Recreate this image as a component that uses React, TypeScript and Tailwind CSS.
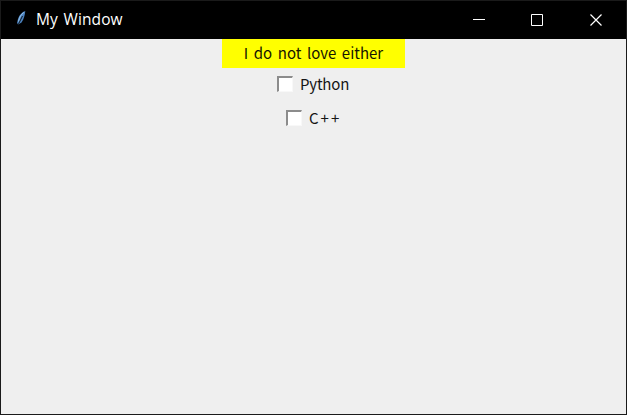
import React from "react";

function CheckOption({ label, className, textClass }: { label: string; className: string; textClass: string }) {
  return (
    <label className={`flex items-start leading-[20px] text-[#151515] ${className}`}>
      <span className="mt-[2px] h-[16px] w-[16px] shrink-0 border-t-2 border-r border-b border-l-2 border-t-[#8c8c8c] border-r-[#f8f8f8] border-b-[#f8f8f8] border-l-[#8c8c8c] bg-white" />
      <span className={`whitespace-nowrap ${textClass}`}>{label}</span>
    </label>
  );
}

export default function App() {
  return (
    <div className="flex h-[415px] w-[627px] flex-col overflow-hidden border border-[#1a1a1a] bg-[#efefef]">
      <header className="flex h-[38px] shrink-0 items-center bg-black text-white">
        <svg className="mb-[4px] ml-[14px] h-[16px] w-[12px]" viewBox="0 0 12 16">
          <path d="M10.3 1C7 2 4 5 3 9L2 13L3.3 14.5L6.5 12.5C9 9 9.8 5 10.3 1Z" fill="#4a80bd" />
          <path d="M8.8 2.5C6 4.5 4.5 7 3.5 11.5" stroke="#9cc8ee" fill="none" />
          <path d="M7.5 6L5.5 10L3 15" stroke="#101820" fill="none" />
        </svg>
        <span className="mb-[2px] ml-[9px] flex-1 whitespace-nowrap font-['Open_Sans',sans-serif] text-[15.5px] leading-[20px] tracking-[0.1px] [word-spacing:1.5px]">
          My Window
        </span>
        <div className="mr-px flex h-full">
          {["M0 5.5H12", "M0.5 0.5H11.5V11.5H0.5Z", "M0.5 0.5L11.5 11.5M11.5 0.5L0.5 11.5"].map((d, i) => (
            <button key={i} className="flex w-[58.5px] items-center justify-center">
              <svg className="h-[12px] w-[12px]" viewBox="0 0 12 12">
                <path d={d} stroke="white" strokeWidth={i === 2 ? 1.2 : 1} fill="none" />
              </svg>
            </button>
          ))}
        </div>
      </header>
      <main className="flex flex-col items-center font-['Noto_Sans_CJK_SC',sans-serif]">
        <div className="h-[29px] w-[183px] bg-[#ffff00] text-center text-[15px] leading-[27px] [word-spacing:2.2px] whitespace-nowrap text-[#151500]">
          I do not love either
        </div>
        <CheckOption label="Python" className="mt-[6px] w-[73px]" textClass="ml-[7px] text-[15px] tracking-[-0.2px]" />
        <CheckOption label="C++" className="mt-[14px] w-[55px]" textClass="ml-[7px] text-[15px] tracking-[2px]" />
      </main>
    </div>
  );
}
